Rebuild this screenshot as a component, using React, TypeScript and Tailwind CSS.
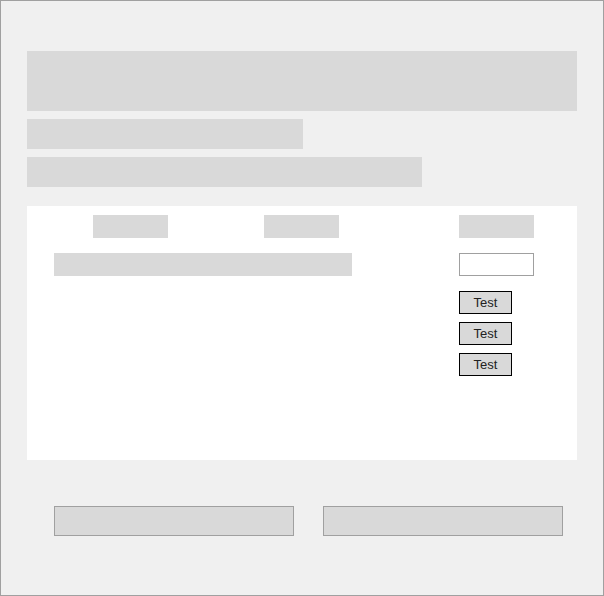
export default function App() {
  return (
    <div className="w-[604px] h-[596px] border border-[#a0a0a0] bg-[#f0f0f0] px-[26px] pt-[50px] font-['Liberation_Sans',Arial,sans-serif]">
      <div className="flex flex-col gap-2">
        <div className="h-[60px] w-[550px] bg-[#d9d9d9]" />
        <div className="h-[30px] w-[276px] bg-[#d9d9d9]" />
        <div className="h-[30px] w-[395px] bg-[#d9d9d9]" />
      </div>

      <div className="mt-[19px] flex h-[254px] w-[550px] bg-white pt-[9px]">
        <div className="w-[432px]">
          <div className="flex gap-[96px] pl-[66px]">
            <div className="h-[23px] w-[75px] bg-[#d9d9d9]" />
            <div className="h-[23px] w-[75px] bg-[#d9d9d9]" />
          </div>
          <div className="ml-[27px] mt-[15px] h-[23px] w-[298px] bg-[#d9d9d9]" />
        </div>
        <div className="flex flex-col">
          <div className="h-[23px] w-[75px] bg-[#d9d9d9]" />
          <input className="mt-[15px] h-[23px] w-[75px] border border-[#a0a0a0] bg-white outline-none" />
          <div className="mt-[15px] flex flex-col gap-2">
            {['Test', 'Test', 'Test'].map((label, i) => (
              <button
                key={i}
                className="flex h-[23px] w-[53px] items-center justify-center border border-black bg-[#d9d9d9] text-[13px] text-[#222]"
              >
                {label}
              </button>
            ))}
          </div>
        </div>
      </div>

      <div className="mt-[46px] flex gap-[29px] pl-[27px]">
        <button className="h-[30px] w-[240px] border border-[#a0a0a0] bg-[#d9d9d9]" />
        <button className="h-[30px] w-[240px] border border-[#a0a0a0] bg-[#d9d9d9]" />
      </div>
    </div>
  );
}
